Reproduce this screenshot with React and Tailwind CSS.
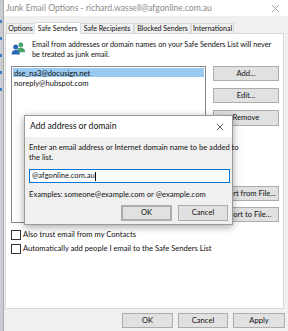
import React from "react";

const F = { fontFamily: '"Segoe UI", Lato, "Liberation Sans", sans-serif' };

function Btn({ children, className = "" }) {
  return (
    <div
      className={
        "flex items-center justify-center bg-[#e1e1e1] border border-[#adadad] text-[7.6px] text-[#111] leading-none whitespace-nowrap " +
        className
      }
    >
      {children}
    </div>
  );
}

function XIcon({ size = 8, color = "#444" }) {
  return (
    <svg width={size} height={size} viewBox="0 0 10 10">
      <path d="M1 1 L9 9 M9 1 L1 9" stroke={color} strokeWidth="1" />
    </svg>
  );
}

function PeopleIcon() {
  return (
    <svg width="15" height="13" viewBox="0 0 16 14">
      <circle cx="10.5" cy="3.2" r="2.6" fill="#4aa36c" />
      <path d="M6 11 C6 7.5 8 6.3 10.5 6.3 C13 6.3 15 7.5 15 11 Z" fill="#4aa36c" />
      <circle cx="5" cy="5.5" r="2.7" fill="#2b67b4" />
      <path d="M0.5 13.5 C0.5 10 2.5 8.7 5 8.7 C7.5 8.7 9.5 10 9.5 13.5 Z" fill="#2b67b4" />
    </svg>
  );
}

export default function App() {
  const tabs = [
    ["Options", "w-[29px]"],
    ["Safe Senders", "w-[47px]"],
    ["Safe Recipients", "w-[54px]"],
    ["Blocked Senders", "w-[57px]"],
    ["International", "w-[43px]"],
  ];
  return (
    <div
      className="relative w-[288px] h-[331px] overflow-hidden bg-[#f0f0f0] flex text-[#111]"
      style={F}
    >
      {/* left strip (background behind window) */}
      <div className="w-[3px] bg-[#c9ccd0] flex flex-col gap-[14px] pt-[20px]">
        <div className="h-[3px] w-[2px] bg-[#3d7fc4]" />
        <div className="h-[3px] w-[2px] bg-[#3d7fc4]" />
        <div className="h-[3px] w-[2px] bg-[#3d7fc4]" />
        <div className="h-[3px] w-[2px] bg-[#3d7fc4]" />
        <div className="h-[3px] w-[2px] bg-[#3d7fc4]" />
      </div>
      <div className="w-[1px] bg-[#aaaaaa]" />
      {/* window */}
      <div className="flex-1 flex flex-col">
        {/* title bar */}
        <div className="h-[16px] bg-white flex items-center justify-between pl-[2px] pr-[8px]">
          <span className="text-[8.6px] text-[#8a8a8a] leading-none whitespace-nowrap">
            Junk Email Options - richard.wassell@afgonline.com.au
          </span>
          <XIcon size={9} color="#9a9a9a" />
        </div>
        {/* tabs */}
        <div className="h-[17px] flex items-end pl-[2px] pt-[5px]">
          {tabs.map(([t, w], i) =>
            i === 1 ? (
              <div
                key={t}
                className={
                  "relative z-10 h-[12px] -mb-[1px] -mx-[1px] bg-white border border-[#d9d9d9] border-b-0 flex items-center justify-center text-[7px] leading-none whitespace-nowrap " +
                  w
                }
              >
                {t}
              </div>
            ) : (
              <div
                key={t}
                className={
                  "h-[10px] bg-[#f0f0f0] border border-[#d9d9d9] border-b-0 flex items-center justify-center text-[7px] leading-none whitespace-nowrap " +
                  w
                }
              >
                {t}
              </div>
            )
          )}
        </div>
        {/* panel */}
        <div className="ml-[1px] mr-[4px] h-[276px] bg-white border border-[#d9d9d9] pl-[5px] pt-[6px] flex flex-col">
          <div className="flex items-start gap-[6px]">
            <div className="pt-[2px]">
              <PeopleIcon />
            </div>
            <div className="text-[7.3px] leading-[10px] whitespace-nowrap">
              Email from addresses or domain names on your Safe Senders List will never
              <br />
              be treated as junk email.
            </div>
          </div>
          <div className="flex mt-[6px]">
            <div className="w-[195px] h-[157px] border border-[#828790] pt-[1px] px-[1px] text-[7.6px] leading-[10px]">
              <div className="bg-[#99c9ef] px-[1px] h-[9px] flex items-center">dse_na3@docusign.net</div>
              <div className="px-[1px] mt-[1px]">noreply@hubspot.com</div>
            </div>
            <div className="ml-[7px] w-[66px] flex flex-col">
              <Btn className="h-[15px]">Add...</Btn>
              <Btn className="h-[15px] mt-[7px]">Edit...</Btn>
              <Btn className="h-[16px] mt-[7px]">Remove</Btn>
              <Btn className="h-[15px] mt-[60px]">Import from File...</Btn>
              <Btn className="h-[15px] mt-[6px]">Export to File...</Btn>
            </div>
          </div>
          <div className="mt-[7px] flex flex-col gap-[4px] text-[7.6px] leading-none">
            <div className="flex items-center gap-[2px]">
              <div className="w-[10px] h-[10px] border border-[#333] bg-white" />
              <span>Also trust email from my Contacts</span>
            </div>
            <div className="flex items-center gap-[2px]">
              <div className="w-[10px] h-[10px] border border-[#333] bg-white" />
              <span>Automatically add people I email to the Safe Senders List</span>
            </div>
          </div>
        </div>
        {/* bottom buttons */}
        <div className="flex justify-end gap-[5px] pr-[3px] mt-[4px]">
          <Btn className="w-[51px] h-[15px]">OK</Btn>
          <Btn className="w-[50px] h-[15px]">Cancel</Btn>
          <Btn className="w-[52px] h-[15px]">Apply</Btn>
        </div>
      </div>

      {/* dialog */}
      <div className="absolute left-[24px] top-[115px] w-[209px] h-[110px] border border-[#9a9a9a] shadow-[0_2px_8px_rgba(0,0,0,0.35)] flex flex-col bg-[#f0f0f0]">
        <div className="h-[21px] bg-white flex items-center justify-between pl-[5px] pr-[8px]">
          <span className="text-[8.6px] leading-none">Add address or domain</span>
          <XIcon size={8} color="#333" />
        </div>
        <div className="flex flex-col pl-[4px] pr-[3px] pt-[5px] text-[7.6px]">
          <div className="leading-[10px] whitespace-nowrap">
            Enter an email address or Internet domain name to be added to
            <br />
            the list.
          </div>
          <div className="mt-[7px] h-[14px] w-[201px] bg-white border border-[#0078d7] flex items-center pl-[2px] leading-none">
            @afgonline.com.au<span className="w-[1px] h-[9px] bg-black" />
          </div>
          <div className="mt-[8px] leading-none whitespace-nowrap">Examples: someone@example.com or @example.com</div>
          <div className="flex justify-end gap-[6px] mt-[6px] pr-[1px]">
            <Btn className="w-[51px] h-[16px] border-[#0078d7] border-2">OK</Btn>
            <Btn className="w-[50px] h-[16px]">Cancel</Btn>
          </div>
        </div>
      </div>
    </div>
  );
}
